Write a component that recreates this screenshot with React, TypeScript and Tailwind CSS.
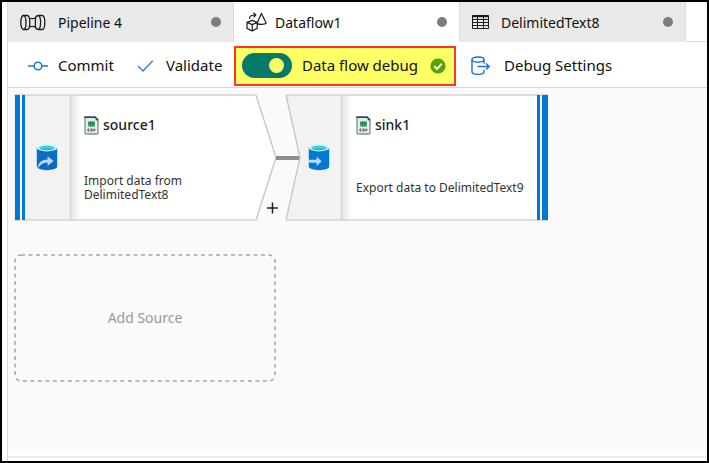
import React, { useState } from 'react';

interface Tab {
  id: string;
  title: string;
  icon: React.ReactNode;
  gap: string;
}

const PipelineIcon = () => (
  <svg width="26" height="17" viewBox="0 0 26 17" fill="none" stroke="#1b1b1b" strokeWidth="1.3">
    <ellipse cx="3.4" cy="8.5" rx="2.6" ry="7" />
    <path d="M3.4 1.5h3.8c1.5 0 2.6 3 2.6 7s-1.1 7-2.6 7H3.4" />
    <path d="M9.4 4q3 1.4 6 0M9.4 13q3-1.4 6 0" />
    <path d="M18.6 1.5c-1.6 0-2.8 1.1-3.2 2.5v9c.4 1.4 1.6 2.5 3.2 2.5" />
    <path d="M18.6 1.5c1.3.8 2 3.6 2 7s-.7 6.2-2 7" />
    <path d="M18.6 1.5h3.6c1.5 0 2.6 3 2.6 7s-1.1 7-2.6 7h-3.6" />
  </svg>
);

const DataflowIcon = () => (
  <svg width="21" height="20" viewBox="0 0 21 20" fill="none" stroke="#1b1b1b" strokeWidth="1.2" strokeLinejoin="round">
    <path d="M1 10.4 6.2 8.4l5 2v6L6.2 19 1 16.4zM1 10.4l5.2 2.2 5-2.2M6.2 12.6V19" />
    <path d="M15.4 1.4 11.2 11c.4 1.8 7.8 2 9 0z" />
    <path d="M3.4 6.6C3.6 4 5.8 2.8 9.4 3M7.4.8 9.8 3 7.6 5.4" />
  </svg>
);

const TableIcon = () => (
  <svg width="17" height="15" viewBox="0 0 17 15" fill="none" stroke="#1b1b1b">
    <path d="M.5.5h16v13H.5z" />
    <path d="M0 1.5h17" strokeWidth="1.4" />
    <path d="M.5 4.5h16M.5 7.5h16M.5 10.5h16M5.5 2v12M11.5 2v12" />
  </svg>
);

const CommitIcon = () => (
  <svg width="20" height="10" viewBox="0 0 20 10" fill="none" stroke="#1a78d6" strokeWidth="1.5">
    <path d="M0 5h6M14 5h6" />
    <circle cx="10" cy="5" r="3.8" />
  </svg>
);

const ValidateIcon = () => (
  <svg width="17" height="12" viewBox="0 0 17 12" fill="none" stroke="#2f7fd3" strokeWidth="1.4">
    <path d="M1 6l5 5L15.8.8" />
  </svg>
);

const DebugIcon = () => (
  <svg width="20" height="20" viewBox="0 0 20 20" fill="none" stroke="#1a6fdc" strokeWidth="1.4">
    <ellipse cx="7" cy="3.6" rx="6" ry="2.6" />
    <path d="M1 3.6v12.2c0 1.5 2.6 2.6 6 2.6s6-1.1 6-2.6v-2M13 3.6v4.2" />
    <path d="M6.5 10.5h11.6M15 7.4l3.2 3.1-3.2 3.1" />
  </svg>
);

const SuccessIcon = () => (
  <svg width="16" height="16" viewBox="0 0 16 16" className="shrink-0">
    <circle cx="8" cy="8" r="7.6" fill="#57a300" />
    <path d="M4.2 8.2 7 11l4.8-5.4" fill="none" stroke="#fff" strokeWidth="1.9" />
  </svg>
);

const CsvIcon = () => (
  <svg width="15" height="19" viewBox="0 0 15 19" className="shrink-0">
    <path d="M1 1h10.2L14 3.8V17q0 1-1 1H2q-1 0-1-1z" fill="#e6eaea" stroke="#8b9397" strokeWidth="1.4" />
    <path d="M.4.6h11L14.4 3.6v1h-2L11 2H.4z" fill="#2b4d41" />
    <path d="M4 5.4h7v5.2H4z" fill="#3fae73" />
    <path d="M4 7.4h7M6.4 5.4v5.2M8.8 5.4v5.2" stroke="#107c41" strokeWidth=".8" />
    <path d="M5.6 13H4v2h1.6M8.3 13H7v1h1.2v1H6.8M9.4 12.8l.9 2.3.9-2.3" fill="none" stroke="#444" strokeWidth=".9" />
  </svg>
);

const DatabaseIcon = ({ kind }: { kind: 'source' | 'sink' }) => (
  <svg width="22" height="27" viewBox="0 0 22 27" className="shrink-0">
    <path d="M.8 3.8v18.8c0 2 4.6 3.6 10.2 3.6s10.2-1.6 10.2-3.6V3.8z" fill={kind === 'source' ? '#0b6cc4' : '#0078d4'} />
    <ellipse cx="11" cy="3.9" rx="10.2" ry="3.5" fill="#dff3f7" />
    <ellipse cx="11" cy="3.9" rx="7.8" ry="2.4" fill="#32d4e8" />
    <path d="M5 5.3c1.6-.8 10.4-.8 12 0-2 1.2-10 1.2-12 0z" fill="#18a8dc" />
    {kind === 'source' ? (
      <path d="M1.6 24.4C2 18.6 6 15.4 11.6 15.4v-3.2l6 4.8-6 4.8v-3.4c-4.2 0-7.4 2-10 6z" fill="#b5dcf8" />
    ) : (
      <path d="M.8 15.8h7.8v-3.4l5 4.8-5 4.8v-3.2H.8z" fill="#b5dcf8" />
    )}
  </svg>
);

const tabs: Tab[] = [
  { id: 'pipeline', title: 'Pipeline 4', icon: <PipelineIcon />, gap: 'gap-3' },
  { id: 'dataflow', title: 'Dataflow1', icon: <DataflowIcon />, gap: 'gap-2' },
  { id: 'dataset', title: 'DelimitedText8', icon: <TableIcon />, gap: 'gap-3' },
];

const SourceShape = () => (
  <svg className="absolute inset-0 overflow-visible" width="262" height="127" viewBox="0 0 262 127">
    <defs>
      <linearGradient id="nodeShade">
        <stop offset="0" stopColor="#e6e6e6" />
        <stop offset="1" stopColor="#fff" />
      </linearGradient>
    </defs>
    <path d="M0 1h242l20 62.5-20 62.5H0z" fill="#fff" />
    <path d="M0 1h56v125H0z" fill="#f2f2f2" />
    <path d="M57 1h10v125H57z" fill="url(#nodeShade)" />
    <path d="M56.5 1v125" stroke="#d6d6d6" strokeWidth="1.6" />
    <path d="M0 1h242M242 126H0" stroke="#d4d4d4" strokeWidth="1.6" />
    <path d="M242 1l20 62.5-20 62.5" fill="none" stroke="#c4c4c4" strokeWidth="1.3" />
    <path d="M6 1h5v125H6z" fill="#fff" />
    <path d="M1 1h5v125H1zM8 1h3v125H8z" fill="#0078d7" />
  </svg>
);

const SinkShape = () => (
  <svg className="absolute inset-0 overflow-visible" width="262" height="127" viewBox="0 0 262 127">
    <path d="M0 1h262v125H0l14-62.5z" fill="#fff" />
    <path d="M0 1h55v125H0l14-62.5z" fill="#f2f2f2" />
    <path d="M56 1h10v125H56z" fill="url(#nodeShade)" />
    <path d="M55.5 1v125" stroke="#d6d6d6" strokeWidth="1.6" />
    <path d="M0 1h262M262 126H0" stroke="#d4d4d4" strokeWidth="1.6" />
    <path d="M0 1l14 62.5L0 126" fill="none" stroke="#c4c4c4" strokeWidth="1.3" />
    <path d="M251 1h3v125h-3zM256 1h6v125h-6z" fill="#0078d7" />
  </svg>
);

const FlowNode = ({ kind, name, description }: { kind: 'source' | 'sink'; name: string; description: string }) => (
  <div className="relative w-[262px] h-[127px] shrink-0">
    {kind === 'source' ? <SourceShape /> : <SinkShape />}
    <div className="relative flex h-full">
      <div className="flex items-center shrink-0 w-[70px] pl-[22px]">
        <DatabaseIcon kind={kind} />
      </div>
      <div className="flex flex-col justify-between pt-[21px] pb-[19px]">
        <h3 className="flex items-center gap-1 text-[14px] leading-[20px] font-medium text-[#222]">
          <CsvIcon />
          {name}
        </h3>
        <p className="flex items-center h-7 w-[180px] text-[12px] leading-[14px] text-[#333]">{description}</p>
      </div>
    </div>
  </div>
);

export default function App() {
  const [activeTab, setActiveTab] = useState('dataflow');
  const [debug, setDebug] = useState(true);

  return (
    <div className="min-h-screen flex flex-col border-2 border-black bg-white pl-[5px] font-['Noto_Sans','Open_Sans',sans-serif] text-[#111]">
      <div className="flex-1 flex flex-col border-l border-[#d8d8d8]">
        {/* Tabs */}
        <div className="flex h-10">
          {tabs.map((tab) => (
            <button
              key={tab.id}
              onClick={() => setActiveTab(tab.id)}
              className={`flex items-center w-[226px] h-10 px-3 text-[14px] border-r border-[#dcdcdc] ${tab.gap} ${
                activeTab === tab.id ? 'bg-white' : 'bg-[#e9e9e9]'
              }`}
            >
              {tab.icon}
              <span className="flex-1 text-left">{tab.title}</span>
              <span className="w-[10px] h-[10px] rounded-full bg-[#7c7c7c]" />
            </button>
          ))}
          <div className="flex-1 border-b border-[#dcdcdc]" />
        </div>

        {/* Toolbar */}
        <div className="flex items-center h-[46px] pt-[2px] pl-5 border-b border-[#d8d8d8] text-[15px]">
          <button className="flex items-center gap-[10px] w-[109px] shrink-0">
            <CommitIcon />
            Commit
          </button>
          <button className="flex items-center gap-3 w-[97px] shrink-0">
            <ValidateIcon />
            Validate
          </button>
          <div className="flex items-center w-[222px] h-10 shrink-0 pl-[6px] pr-2 border-2 border-[#ff3232] bg-[#ffff66]">
            <label className="flex-1 flex items-center gap-[10px] whitespace-nowrap">
              <input
                type="checkbox"
                role="switch"
                checked={debug}
                onChange={(e) => setDebug(e.target.checked)}
                className="appearance-none flex items-center w-[50px] h-[25px] px-1 rounded-full bg-[#8a8a8a] checked:bg-[#057a68] checked:justify-end checked:pr-2 before:block before:w-[15px] before:h-[15px] before:rounded-full before:bg-[#ffff66]"
              />
              Data flow debug
            </label>
            <SuccessIcon />
          </div>
          <button className="flex items-center gap-[13px] pl-[15px] whitespace-nowrap">
            <DebugIcon />
            Debug Settings
          </button>
        </div>

        {/* Canvas */}
        <div className="flex-1 bg-[#fafafa] pt-[6px] pl-[6px]">
          <div className="flex">
            <FlowNode kind="source" name="source1" description="Import data from DelimitedText8" />
            <div className="relative flex items-center w-[10px] shrink-0">
              <span className="absolute left-0 w-6 h-1 bg-[#8f8e8c]" />
              <button aria-label="Add transformation" className="absolute right-2 bottom-[7px]">
                <svg width="11" height="12" viewBox="0 0 11 12" stroke="#222" strokeWidth="1.5">
                  <path d="M5.5 .5v11M0 6h11" />
                </svg>
              </button>
            </div>
            <FlowNode kind="sink" name="sink1" description="Export data to DelimitedText9" />
          </div>
          <button className="relative mt-[33px] w-[262px] h-[128px] pb-[2px] text-[14px] text-[#999]">
            <svg className="absolute inset-0" width="262" height="128" fill="none">
              <rect x="1" y="1" width="260" height="126" rx="6" stroke="#a6a6a6" strokeWidth="1.5" strokeDasharray="4 3.5" />
            </svg>
            Add Source
          </button>
        </div>
        <div className="h-[10px] pt-[5px]">
          <div className="h-[2px] bg-[#eee]" />
        </div>
      </div>
    </div>
  );
}
